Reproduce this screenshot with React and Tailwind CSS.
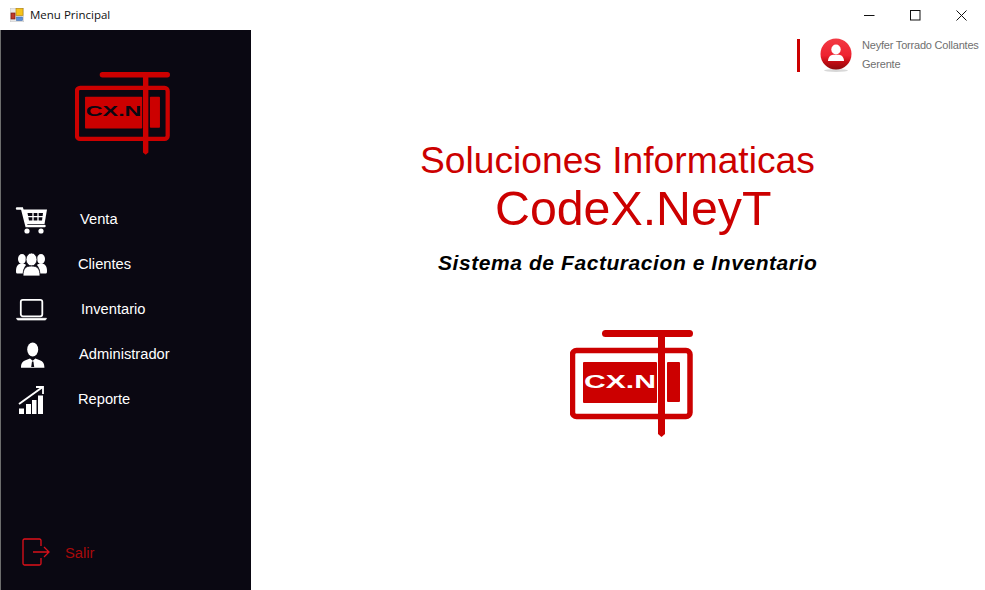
const RED = '#cc0000'

function Logo({ width, height, textColor, bg }) {
  return (
    <svg width={width} height={height} viewBox="0 0 123 108">
      <rect x="32" y="1" width="91" height="7" rx="3.5" fill={RED} />
      <rect x="2.500" y="21.500" width="117.500" height="66" rx="4" fill={bg} stroke={RED} strokeWidth="5.500" />
      <rect x="13" y="33" width="74" height="41" rx="1" fill={RED} />
      <rect x="97" y="33" width="13" height="40" rx="1" fill={RED} />
      <path d="M88 4h7v101l-3.500 3-3.500-3z" fill={RED} />
      <text x="14" y="58.500" fontFamily="Liberation Sans, Arial, sans-serif" fontWeight="700" fontSize="19" textLength="72" lengthAdjust="spacingAndGlyphs" fill={textColor}>CX.N</text>
    </svg>
  )
}

const icons = {
  cart: (
    <>
      <path d="M5 8.500h5l4.500 17.500h18" fill="none" stroke="white" strokeWidth="2.400" strokeLinecap="round" />
      <path d="M10 9.500h25l-2.500 14.500H14z" fill="white" />
      <path d="M15.500 13h15.500l-1 7.500H17z" fill="#0a0812" />
      <path d="M16 16.700h15M21 12v9M26 12v9" stroke="white" strokeWidth="1.300" />
      <circle cx="15" cy="31" r="2.600" fill="white" />
      <circle cx="29" cy="31" r="2.600" fill="white" />
    </>
  ),
  users: (
    <>
      <ellipse cx="10" cy="14" rx="4" ry="5" fill="white" />
      <ellipse cx="29" cy="14" rx="4" ry="5" fill="white" />
      <path d="M4 26c0-5 2-7.500 6-7.500 2 0 3 .5 4 1.500-2 2-3 5-3 8.500H5c-.7 0-1-.8-1-2.500zM35 26c0-5-2-7.500-6-7.500-2 0-3 .5-4 1.500 2 2 3 5 3 8.500h6c.7 0 1-.8 1-2.500z" fill="white" />
      <ellipse cx="19.500" cy="14.500" rx="5.500" ry="6.500" fill="white" stroke="#0a0812" strokeWidth=".8" />
      <path d="M11 31c0-7 2-10 8.500-10s8.500 3 8.500 10z" fill="white" stroke="#0a0812" strokeWidth=".8" />
    </>
  ),
  laptop: (
    <>
      <rect x="8.800" y="9.800" width="21.500" height="16.500" rx="2" fill="none" stroke="white" strokeWidth="1.800" />
      <path d="M4.500 28.300h30l-1 1.700h-28z" fill="white" stroke="white" strokeWidth=".7" />
    </>
  ),
  admin: (
    <>
      <ellipse cx="20.700" cy="14.500" rx="5.500" ry="7" fill="white" />
      <path d="M9 32.700c0-4.500 1.500-6.500 4.500-7.500l4.500-1.700 2.700 2.200 2.700-2.200 4.500 1.700c3 1 4.500 3 4.500 7.500z" fill="white" />
      <path d="M20 26.500h1.400l.8 5.500h-3z" fill="#0a0812" />
    </>
  ),
  chart: (
    <>
      <path d="M7 28.500h5V34H7zM14 24h5v10h-5zM20 20h4.500v14H20zM26 15.500h5V34h-5z" fill="white" />
      <path d="M7 24 30 7.500" stroke="white" strokeWidth="2" />
      <path d="M24 7h7v7" fill="none" stroke="white" strokeWidth="1.800" />
    </>
  ),
}

const menu = [
  { label: 'Venta', icon: 'cart', cls: 'ml-[28px]' },
  { label: 'Clientes', icon: 'users', cls: 'ml-[26px]' },
  { label: 'Inventario', icon: 'laptop', cls: 'ml-[29px]' },
  { label: 'Administrador', icon: 'admin', cls: 'ml-[27px]' },
  { label: 'Reporte', icon: 'chart', cls: 'ml-[26px]' },
]

export default function App() {
  return (
    <div className="w-[985px] h-[590px] flex flex-col overflow-hidden bg-white font-['Liberation_Sans',Arial,sans-serif]">
      {/* barra de titulo */}
      <div className="h-[30px] flex items-center pl-[10px] pr-[18px]">
        <svg width="14" height="14" viewBox="0 0 14 14">
          <rect x="0" y="0" width="14" height="14" fill="#e8e8e8" stroke="#b0b0b0" strokeWidth=".5" />
          <rect x="6" y="0.500" width="7" height="7" fill="#f5c21a" stroke="#b98a10" strokeWidth=".7" />
          <rect x="1" y="5" width="4" height="6" fill="#c0392b" stroke="#7a1c12" strokeWidth=".7" />
          <rect x="6.500" y="9" width="6" height="3.500" fill="#5b8fd8" stroke="#2f5fa8" strokeWidth=".5" />
        </svg>
        <span className="ml-[6px] text-[11.500px] text-[#111] font-['Open_Sans',sans-serif]">Menu Principal</span>
        <div className="ml-auto flex items-center gap-[35px]">
          <svg width="11" height="11" viewBox="0 0 11 11"><path d="M0 5.500h10.500" stroke="#111" /></svg>
          <svg width="11" height="11" viewBox="0 0 11 11"><rect x=".5" y=".5" width="9.500" height="9.500" fill="none" stroke="#111" /></svg>
          <svg width="11" height="11" viewBox="0 0 11 11"><path d="M.5.500l10 10M10.500.500l-10 10" stroke="#111" /></svg>
        </div>
      </div>

      <div className="flex-1 flex min-h-0">
        {/* menu lateral */}
        <aside className="w-[251px] flex flex-col bg-[#0a0812] border-l border-[#6d6d6d]">
          <div className="mt-[41px] ml-[74px]">
            <Logo width={95} height={84} textColor="#0a0812" bg="#0a0812" />
          </div>
          <nav className="mt-[42px] flex flex-col">
            {menu.map((item) => (
              <div key={item.label} className="h-[45px] flex items-center pl-[11px]">
                <svg width="40" height="40" viewBox="0 0 40 40">{icons[item.icon]}</svg>
                <span className={`${item.cls} text-[14.700px] text-white`}>{item.label}</span>
              </div>
            ))}
          </nav>
          <div className="mt-auto mb-[24px] ml-[21px] flex items-center">
            <svg width="28" height="28" viewBox="0 0 28 28">
              <path d="M19 8V2.500a1.500 1.500 0 0 0-1.500-1.500h-15A1.500 1.500 0 0 0 1 2.500v23A1.500 1.500 0 0 0 2.500 27h15a1.500 1.500 0 0 0 1.500-1.500V20" fill="none" stroke="#e0101a" strokeWidth="1.300" />
              <path d="M11 14h16M22 9l5 5-5 5" fill="none" stroke="#d8101a" strokeWidth="1.300" />
            </svg>
            <span className="ml-[15px] mt-[2px] text-[14.700px] text-[#a80a0a]">Salir</span>
          </div>
        </aside>

        {/* contenido */}
        <main className="flex-1 flex flex-col">
          <div className="mt-[6px] flex items-center pl-[546px]">
            <div className="w-[3px] h-[33px] bg-[#cc0000]" />
            <svg width="32" height="34" viewBox="0 0 32 34" className="ml-[20px]">
              <defs>
                <linearGradient id="av" x1="0" y1="0" x2="0" y2="1">
                  <stop offset="0" stopColor="#f23a44" />
                  <stop offset=".55" stopColor="#ee2230" />
                  <stop offset=".75" stopColor="#c40d14" />
                  <stop offset="1" stopColor="#8f0a0c" />
                </linearGradient>
              </defs>
              <ellipse cx="16" cy="32.500" rx="12" ry="1.500" fill="#d8d8d8" />
              <circle cx="16" cy="16" r="15.500" fill="url(#av)" />
              <ellipse cx="16" cy="11.500" rx="4.700" ry="5" fill="white" />
              <path d="M8 23c0-4 2.500-6 5-6.300h6c2.500.3 5 2.300 5 6.300z" fill="white" />
            </svg>
            <div className="ml-[10px] flex flex-col text-[11px] text-[#6f6f6f] tracking-[-0.2px]">
              <span className="h-[19px] leading-[19px] whitespace-nowrap">Neyfer Torrado Collantes</span>
              <span className="h-[19px] leading-[19px]">Gerente</span>
            </div>
          </div>

          <h1 className="mt-[66px] ml-[169px] text-[37.200px] leading-[41px] font-normal text-[#cc0000] whitespace-nowrap">Soluciones Informaticas</h1>
          <h2 className="ml-[244px] text-[48.300px] leading-[55px] font-normal text-[#cc0000] whitespace-nowrap">CodeX.NeyT</h2>
          <p className="mt-[15px] ml-[187px] text-[21px] leading-[23px] tracking-[0.57px] font-bold italic text-black whitespace-nowrap">Sistema de Facturacion e Inventario</p>

          <div className="mt-[55px] ml-[319px]">
            <Logo width={123} height={108} textColor="#ffffff" bg="#ffffff" />
          </div>
        </main>
      </div>
    </div>
  )
}
